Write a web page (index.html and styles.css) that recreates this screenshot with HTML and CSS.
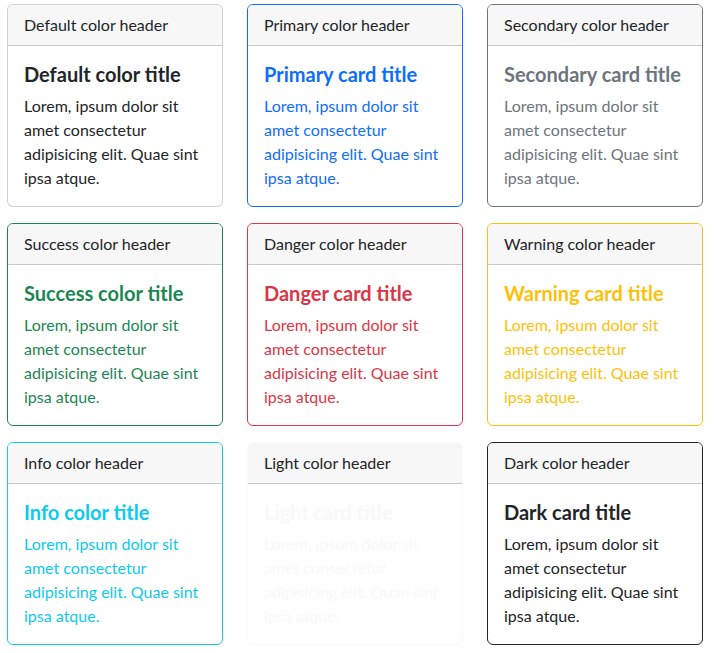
FILE: index.html
```html
<!DOCTYPE html>
<html lang="en">
<head>
<meta charset="utf-8">
<title>Cards</title>
<link rel="stylesheet" href="styles.css">
</head>
<body>
<div class="grid">
  <div class="card">
    <div class="card-header">Default color header</div>
    <div class="card-body">
      <h5 class="card-title">Default color title</h5>
      <p class="card-text">Lorem, ipsum dolor sit amet consectetur adipisicing elit. Quae sint ipsa atque.</p>
    </div>
  </div>
  <div class="card border-primary">
    <div class="card-header">Primary color header</div>
    <div class="card-body text-primary">
      <h5 class="card-title">Primary card title</h5>
      <p class="card-text">Lorem, ipsum dolor sit amet consectetur adipisicing elit. Quae sint ipsa atque.</p>
    </div>
  </div>
  <div class="card border-secondary">
    <div class="card-header">Secondary color header</div>
    <div class="card-body text-secondary">
      <h5 class="card-title">Secondary card title</h5>
      <p class="card-text">Lorem, ipsum dolor sit amet consectetur adipisicing elit. Quae sint ipsa atque.</p>
    </div>
  </div>
  <div class="card border-success">
    <div class="card-header">Success color header</div>
    <div class="card-body text-success">
      <h5 class="card-title">Success color title</h5>
      <p class="card-text">Lorem, ipsum dolor sit amet consectetur adipisicing elit. Quae sint ipsa atque.</p>
    </div>
  </div>
  <div class="card border-danger">
    <div class="card-header">Danger color header</div>
    <div class="card-body text-danger">
      <h5 class="card-title">Danger card title</h5>
      <p class="card-text">Lorem, ipsum dolor sit amet consectetur adipisicing elit. Quae sint ipsa atque.</p>
    </div>
  </div>
  <div class="card border-warning">
    <div class="card-header">Warning color header</div>
    <div class="card-body text-warning">
      <h5 class="card-title">Warning card title</h5>
      <p class="card-text">Lorem, ipsum dolor sit amet consectetur adipisicing elit. Quae sint ipsa atque.</p>
    </div>
  </div>
  <div class="card border-info">
    <div class="card-header">Info color header</div>
    <div class="card-body text-info">
      <h5 class="card-title">Info color title</h5>
      <p class="card-text">Lorem, ipsum dolor sit amet consectetur adipisicing elit. Quae sint ipsa atque.</p>
    </div>
  </div>
  <div class="card border-light">
    <div class="card-header">Light color header</div>
    <div class="card-body text-light">
      <h5 class="card-title">Light card title</h5>
      <p class="card-text">Lorem, ipsum dolor sit amet consectetur adipisicing elit. Quae sint ipsa atque.</p>
    </div>
  </div>
  <div class="card border-dark">
    <div class="card-header">Dark color header</div>
    <div class="card-body text-dark">
      <h5 class="card-title">Dark card title</h5>
      <p class="card-text">Lorem, ipsum dolor sit amet consectetur adipisicing elit. Quae sint ipsa atque.</p>
    </div>
  </div>
</div>
</body>
</html>
```
FILE: styles.css
```css
* { box-sizing: border-box; }
body {
  margin: 0;
  background: #fff;
  color: #212529;
  font-family: Lato, "Noto Sans", sans-serif;
  font-size: 16px;
  line-height: 24px;
}
.grid {
  display: grid;
  grid-template-columns: repeat(3, 216px);
  column-gap: 24px;
  row-gap: 16px;
  padding: 4px 0 0 7px;
}
.card {
  border: 1px solid rgba(0,0,0,0.175);
  border-radius: 6px;
  overflow: hidden;
  background: #fff;
}
.card-header {
  padding: 8px 16px;
  background: #f7f7f7;
  border-bottom: 1px solid rgba(0,0,0,0.175);
  color: #212529;
}
.card-body {
  padding: 16px;
}
.card-title {
  margin: 0 0 8px;
  font-size: 20px;
  line-height: 24px;
  font-weight: 700;
}
.card-text { margin: 0; }
.border-primary { border-color: #0d6efd; }
.border-secondary { border-color: #6c757d; }
.border-success { border-color: #198754; }
.border-danger { border-color: #dc3545; }
.border-warning { border-color: #ffc107; }
.border-info { border-color: #0dcaf0; }
.border-light { border-color: #f8f9fa; }
.border-dark { border-color: #212529; }
.text-primary { color: #0d6efd; }
.text-secondary { color: #6c757d; }
.text-success { color: #198754; }
.text-danger { color: #dc3545; }
.text-warning { color: #ffc107; }
.text-info { color: #0dcaf0; }
.text-light { color: #f8f9fa; }
.text-dark { color: #212529; }
```
